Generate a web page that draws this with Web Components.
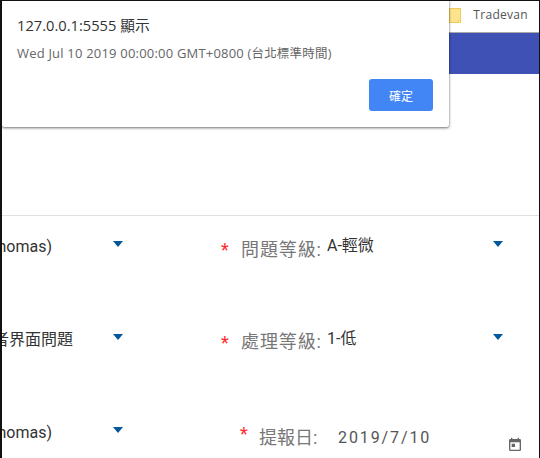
<!DOCTYPE html>
<html>
<head>
<meta charset="utf-8">
<style>
  html, body { margin: 0; padding: 0; background: #fff; }
  body { width: 540px; height: 458px; overflow: hidden; font-family: Roboto, "Noto Sans CJK TC", sans-serif; }
</style>
</head>
<body>
<app-frame>
  <bookmark-bar>Tradevan</bookmark-bar>
  <page-header></page-header>
  <issue-form>
    <form-select end="50">(Thomas)</form-select>
    <form-select required label="問題等級:">A-輕微</form-select>
    <form-select end="71">使用者界面問題</form-select>
    <form-select required label="處理等級:" style="--label-drop:-1px">1-低</form-select>
    <form-select end="50">(Thomas)</form-select>
    <form-date required label="提報日:" value="2019/7/10"></form-date>
  </issue-form>
  <alert-dialog title="127.0.0.1:5555 顯示" ok="確定">Wed Jul 10 2019 00:00:00 GMT+0800 <span style="font-size:12.5px">(台北標準時間)</span></alert-dialog>
</app-frame>
<script>
class AppFrame extends HTMLElement {
    constructor(){
        super();
        this.attachShadow({mode: 'open'}).innerHTML = `
        <style>
        :host{
            display:flex;
            flex-direction:column;
            position:relative;
            box-sizing:border-box;
            width:540px;
            height:458px;
            overflow:hidden;
            background:#fff;
            border-top:1px solid #111;
            border-left:2px solid #111;
            border-right:1px solid #111;
        }
        ::slotted(*){ flex:none; }
        </style>
        <slot></slot>`;
    }
}
class BookmarkBar extends HTMLElement {
    constructor(){
        super();
        this.attachShadow({mode: 'open'}).innerHTML = `
        <style>
        :host{
            display:flex;
            align-items:center;
            justify-content:flex-end;
            gap:11px;
            box-sizing:border-box;
            height:32px;
            padding:0 11px 3px 0;
            background:#fff;
            border-bottom:1px solid #a9a9a9;
            font:12px/1 "Open Sans", sans-serif;
            letter-spacing:.3px;
            color:#555;
        }
        svg{ display:block; }
        </style>
        <svg width="13" height="15" viewBox="0 0 13 15">
            <path d="M.5.5h11v14H.5z" fill="#ffe48f" stroke="#f2cb57"/>
            <path d="M9.5 12.5h2v2h-2z" fill="#fff" stroke="#f2cb57"/>
        </svg>
        <slot></slot>`;
    }
}
class PageHeader extends HTMLElement {
    constructor(){
        super();
        this.attachShadow({mode: 'open'}).innerHTML = `
        <style>
        :host{
            display:block;
            height:41px;
            background:#3f51b5;
        }
        </style>`;
    }
}
class IssueForm extends HTMLElement {
    constructor(){
        super();
        this.attachShadow({mode: 'open'}).innerHTML = `
        <style>
        :host{
            display:grid;
            grid-template-columns:216px 1fr;
            grid-auto-rows:93px;
            margin-top:141px;
            padding-top:15px;
            border-top:1px solid #e0e0e0;
        }
        </style>
        <slot></slot>`;
    }
}
class FormSelect extends HTMLElement {
    constructor(){
        super();
        const label = this.getAttribute('label');
        const end = this.getAttribute('end');
        const req = this.hasAttribute('required');
        this.attachShadow({mode: 'open'}).innerHTML = `
        <style>
        :host{
            display:flex;
            align-items:flex-start;
            height:32px;
            font-size:16px;
            color:#333;
        }
        .req{ color:#ff2a2a; width:20px; margin-left:3px; font-size:18px; line-height:26px; height:26px; flex:none; padding-top:6px; }
        .label{ color:#777; width:80px; flex:none; font-size:18px; letter-spacing:.9px; line-height:26px; padding-top:calc(6px + var(--label-drop, 0px)); white-space:nowrap; }
        .value{ line-height:24px; white-space:nowrap; padding:3px 0 0 6px; flex:1; }
        .value.left{ flex:none; width:${end}px; display:flex; justify-content:flex-end; padding:4px 0 0; }
        .arrow{ width:0; height:0; border:5px solid transparent; border-top:6px solid #01579b; border-bottom:0; margin-top:10px; flex:none; }
        .left + .arrow{ margin-left:${111 - end}px; }
        .value:not(.left) + .arrow{ margin-right:36px; }
        </style>
        ${req ? `<span class="req">*</span><span class="label">${label}</span>` : ''}
        <span class="value ${label ? '' : 'left'}"><span><slot></slot></span></span>
        <span class="arrow"></span>`;
    }
}
class FormDate extends HTMLElement {
    constructor(){
        super();
        this.attachShadow({mode: 'open'}).innerHTML = `
        <style>
        :host{
            display:flex;
            align-items:flex-start;
            height:32px;
            padding-left:22px;
            color:#555;
        }
        .req{ color:#ff2a2a; width:19px; font-size:18px; line-height:26px; flex:none; padding-top:4px; }
        .label{ color:#777; font-size:18px; line-height:26px; width:79px; flex:none; white-space:nowrap; padding-top:8px; }
        .value{ flex:1; font-size:16px; letter-spacing:1.9px; line-height:26px; padding-top:8px; }
        svg{ margin:20px 17px 0 0; flex:none; }
        </style>
        <span class="req">*</span>
        <span class="label">${this.getAttribute('label')}</span>
        <span class="value">${this.getAttribute('value')}</span>
        <svg width="14" height="14" viewBox="3 1 18 21"><path fill="#666" d="M19 4h-1V2h-2v2H8V2H6v2H5a2 2 0 0 0-2 2v14a2 2 0 0 0 2 2h14a2 2 0 0 0 2-2V6a2 2 0 0 0-2-2zm0 16H5V9h14zM7 11h5v5H7z"/></svg>`;
    }
}
class AlertDialog extends HTMLElement {
    constructor(){
        super();
        this.attachShadow({mode: 'open'}).innerHTML = `
        <style>
        :host{
            position:absolute;
            top:-1px;
            left:0;
            box-sizing:border-box;
            display:flex;
            flex-direction:column;
            width:447px;
            height:127px;
            padding:15px 16px 16px 15px;
            background:#fff;
            border-radius:0 0 2px 2px;
            box-shadow:0 1px 3px rgba(0,0,0,.55), 0 0 1px rgba(0,0,0,.4);
            font-family:"Open Sans", "Noto Sans CJK TC", sans-serif;
        }
        .title{ font-size:14.7px; line-height:20px; color:#333; }
        .msg{ font-size:13px; letter-spacing:.2px; line-height:18px; color:#666; margin-top:9px; white-space:nowrap; }
        .actions{ display:flex; justify-content:flex-end; margin-top:auto; }
        button{ width:64px; height:32px; border:0; border-radius:3px; background:#4285f4; color:#fff; font:12px "Noto Sans CJK TC", sans-serif; padding:0; }
        </style>
        <div class="title">${this.getAttribute('title')}</div>
        <div class="msg"><slot></slot></div>
        <div class="actions"><button>${this.getAttribute('ok')}</button></div>`;
    }
}
customElements.define('app-frame', AppFrame);
customElements.define('bookmark-bar', BookmarkBar);
customElements.define('page-header', PageHeader);
customElements.define('issue-form', IssueForm);
customElements.define('form-select', FormSelect);
customElements.define('form-date', FormDate);
customElements.define('alert-dialog', AlertDialog);
</script>
</body>
</html>
